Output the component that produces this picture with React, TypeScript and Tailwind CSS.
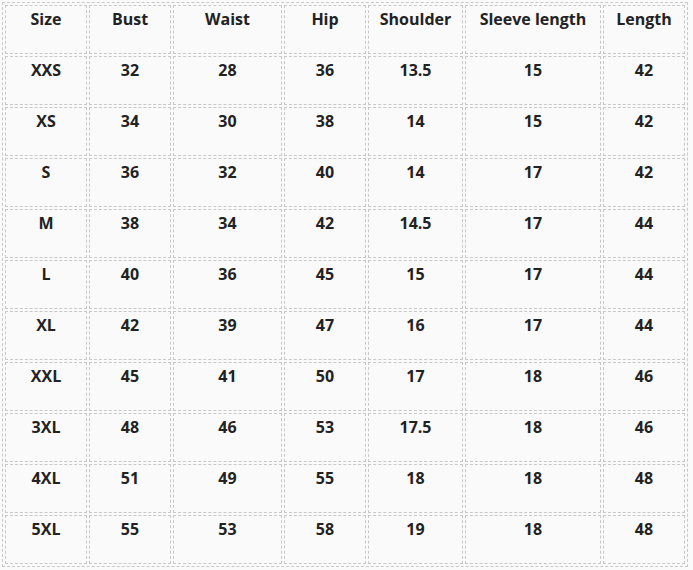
const headers = ["Size", "Bust", "Waist", "Hip", "Shoulder", "Sleeve length", "Length"];

const rows = [
  ["XXS", "32", "28", "36", "13.5", "15", "42"],
  ["XS", "34", "30", "38", "14", "15", "42"],
  ["S", "36", "32", "40", "14", "17", "42"],
  ["M", "38", "34", "42", "14.5", "17", "44"],
  ["L", "40", "36", "45", "15", "17", "44"],
  ["XL", "42", "39", "47", "16", "17", "44"],
  ["XXL", "45", "41", "50", "17", "18", "46"],
  ["3XL", "48", "46", "53", "17.5", "18", "46"],
  ["4XL", "51", "49", "55", "18", "18", "48"],
  ["5XL", "55", "53", "58", "19", "18", "48"],
];

const widths = ["w-[82px]", "w-[82px]", "w-[109px]", "w-[82px]", "w-[95px]", "w-[136px]", "w-[82px]"];

function Cell({ children }: { children: React.ReactNode }) {
  return (
    <td className="h-[49px] border border-dashed border-[#c8c8c8] p-0 pt-[1px] text-center align-top">
      {children}
    </td>
  );
}

export default function App() {
  return (
    <div className="min-h-screen bg-[#fafafa] pl-[2px] pt-[2px] font-['Open_Sans',sans-serif] text-[16px] font-bold text-[#222]">
      <table className="table-fixed w-[686px] border-separate border-spacing-[2px] border border-dashed border-[#c8c8c8]">
        <colgroup>
          {widths.map((w, i) => (
            <col key={i} className={w} />
          ))}
        </colgroup>
        <tbody>
          <tr>
            {headers.map((h) => (
              <Cell key={h}>{h}</Cell>
            ))}
          </tr>
          {rows.map((r) => (
            <tr key={r[0]}>
              {r.map((v, i) => (
                <Cell key={i}>{v}</Cell>
              ))}
            </tr>
          ))}
        </tbody>
      </table>
    </div>
  );
}
